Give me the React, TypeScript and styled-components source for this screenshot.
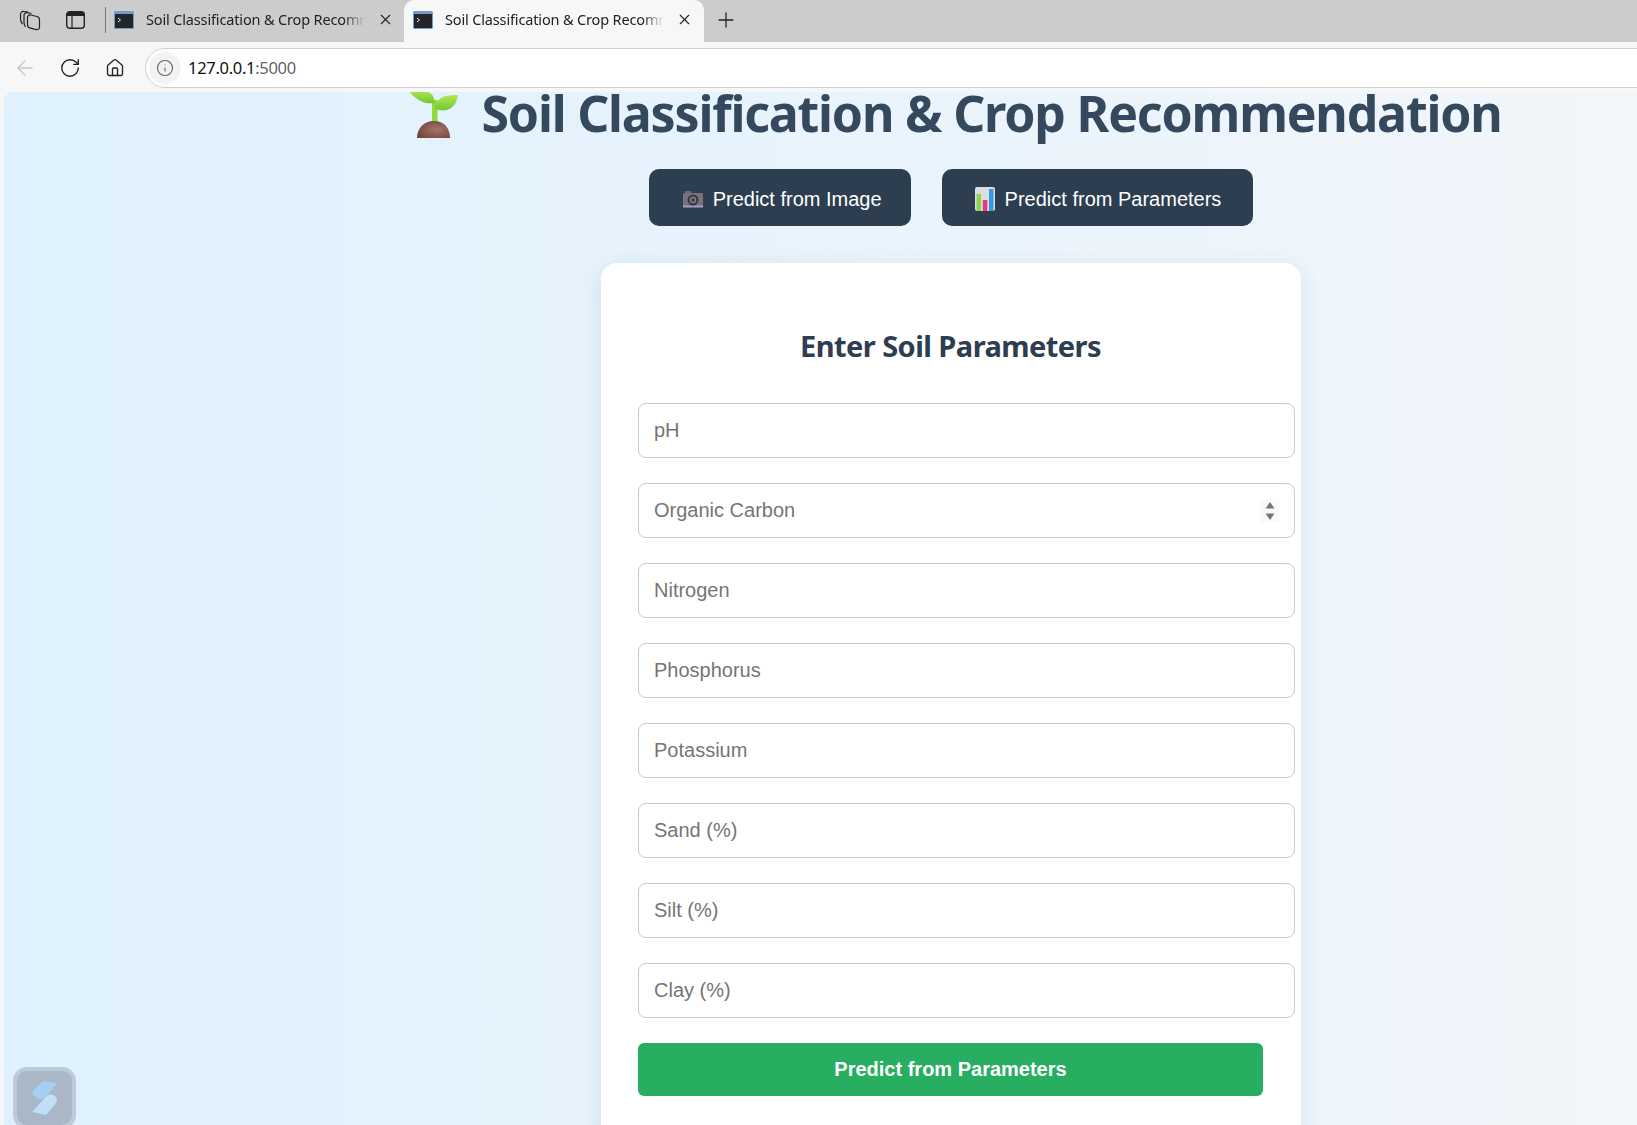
import styled, { createGlobalStyle } from 'styled-components';
import { ArrowLeft, RotateCw, Home, Info, Plus, X } from 'lucide-react';

const FIELDS_BEFORE = ['pH'];
const FIELDS_AFTER = ['Nitrogen', 'Phosphorus', 'Potassium', 'Sand (%)', 'Silt (%)', 'Clay (%)'];

const TerminalIcon = () => (
  <svg width="20" height="18" viewBox="0 0 20 18">
    <rect x="0" y="0" width="20" height="18" rx="1.5" fill="#6f9bd1" />
    <rect x="1" y="3" width="18" height="14" fill="#22262b" />
    <path d="M4 7l2.5 2L4 11" stroke="#e8e8e8" strokeWidth="1" fill="none" />
  </svg>
);

const CollectionsIcon = () => (
  <svg width="22" height="22" viewBox="0 0 22 22" fill="none" stroke="#222" strokeWidth="1.2">
    <path d="M3.5 15C2.200 13.500 1.500 12 1.500 10V5.500C1.500 3.500 3 2.200 5 2.500L9 3.200" />
    <path d="M6.500 18C5.500 16.500 5 15 5 13.500V6.500C5 4.500 6.500 3.200 8.500 3.700L12.500 4.500" />
    <path d="M8.500 8.500C8.500 6.800 10 5.600 11.700 6L18 7.500C19.500 7.900 20.500 9.200 20.500 10.700V18C20.500 19.800 19 21 17.300 20.600L11.500 19.200C9.800 18.800 8.500 17.400 8.500 15.700z" />
  </svg>
);

const SidebarIcon = () => (
  <svg width="19" height="18" viewBox="0 0 19 18" fill="none">
    <rect x="0.7" y="0.7" width="17.600" height="16.600" rx="3" stroke="#222" strokeWidth="1.400" />
    <path d="M1 4V3.500C1 1.800 2 1 3.500 1h12c1.500 0 2.500.8 2.500 2.500V5H1z" fill="#222" />
    <path d="M6 5v12" stroke="#222" strokeWidth="1.200" />
  </svg>
);

const SproutEmoji = () => (
  <svg width="52" height="48" viewBox="0 0 52 48">
    <defs>
      <linearGradient id="leaf" x1="0" y1="0" x2="0" y2="1">
        <stop offset="0" stopColor="#b5e655" />
        <stop offset="1" stopColor="#6fc92f" />
      </linearGradient>
      <radialGradient id="soil" cx="0.6" cy="0.5" r="0.7">
        <stop offset="0" stopColor="#a8736a" />
        <stop offset="1" stopColor="#6d4339" />
      </radialGradient>
    </defs>
    <path d="M24 34V10h5.500v24z" fill="#8edb3c" />
    <path d="M1 0c5 0 9 0 16 1 6 1 9 4 10 12-9 1-14-1-19-5C4 5 2 3 1 0z" fill="url(#leaf)" />
    <path d="M50 5c-1 8-5 13-11 15-5 1-8 0-12-1 1-7 5-12 11-13 4-1 8-1 12-1z" fill="url(#leaf)" />
    <path d="M9 48c0-10 7-17 17-17s16 7 16 17z" fill="url(#soil)" />
  </svg>
);

const CameraEmoji = () => (
  <svg width="20" height="18" viewBox="0 0 20 18">
    <rect x="2" y="1" width="6" height="3" fill="#6d6a73" />
    <rect x="0" y="3" width="20" height="14" rx="1" fill="#77737b" />
    <rect x="0" y="15.500" width="20" height="2" fill="#a79bc0" />
    <circle cx="10" cy="10" r="5.500" fill="#3c3a40" />
    <circle cx="10" cy="10" r="3.200" fill="#8a8690" />
    <circle cx="10" cy="10" r="2" fill="#46434b" />
  </svg>
);

const ChartEmoji = () => (
  <svg width="20" height="24" viewBox="0 0 20 24">
    <rect x="0" y="0" width="20" height="24" rx="2" fill="#dcdce2" />
    <rect x="1.500" y="7" width="4.500" height="17" fill="#8fd44f" />
    <rect x="7.800" y="13" width="4.500" height="11" fill="#ea3a7c" />
    <rect x="14" y="2" width="4.500" height="22" fill="#2f9ae6" />
  </svg>
);

const SelectArrows = () => (
  <ArrowsBox>
    <svg width="10" height="18" viewBox="0 0 10 18" fill="#757575">
      <path d="M5 0l4.500 6.500H.5z" />
      <path d="M5 18L.5 11.500h9z" />
    </svg>
  </ArrowsBox>
);

const App = () => {
  return (
    <Screen>
      <GlobalStyle />
      <TabStrip>
        <StripIcon $width={60}>
          <CollectionsIcon />
        </StripIcon>
        <StripIcon $width={30}>
          <SidebarIcon />
        </StripIcon>
        <StripDivider />
        <Tab>
          <TerminalIcon />
          <TabTitle>Soil Classification &amp; Crop Recommendation</TabTitle>
          <X size={17} color="#222" strokeWidth={1.6} />
        </Tab>
        <Tab $active>
          <TerminalIcon />
          <TabTitle>Soil Classification &amp; Crop Recommendation</TabTitle>
          <X size={17} color="#222" strokeWidth={1.6} />
        </Tab>
        <NewTab>
          <Plus size={24} color="#222" strokeWidth={1.300} />
        </NewTab>
      </TabStrip>

      <Toolbar>
        <NavButton>
          <ArrowLeft size={24} color="#c8c8c8" strokeWidth={1.400} />
        </NavButton>
        <NavButton>
          <RotateCw size={22} color="#222" strokeWidth={1.500} />
        </NavButton>
        <NavButton>
          <Home size={20} color="#222" strokeWidth={1.600} />
        </NavButton>
        <AddressBar>
          <SiteInfo>
            <Info size={18} color="#666" strokeWidth={1.500} />
          </SiteInfo>
          <UrlHost>127.0.0.1</UrlHost>
          <UrlPort>:5000</UrlPort>
        </AddressBar>
      </Toolbar>

      <Viewport>
        <Page>
          <Title>
            <TitleEmoji>
              <SproutEmoji />
            </TitleEmoji>
            Soil Classification &amp; Crop Recommendation
          </Title>

          <ModeRow>
            <ModeButton>
              <CameraEmoji />
              Predict from Image
            </ModeButton>
            <ModeButton>
              <ChartEmoji />
              Predict from Parameters
            </ModeButton>
          </ModeRow>

          <Card>
            <CardHeading>Enter Soil Parameters</CardHeading>
            <Form>
              {FIELDS_BEFORE.map((name) => (
                <Field key={name} placeholder={name} />
              ))}
              <SelectWrap>
                <SoilSelect defaultValue="">
                  <option value="" disabled>
                    Organic Carbon
                  </option>
                  <option value="low">Low</option>
                  <option value="medium">Medium</option>
                  <option value="high">High</option>
                </SoilSelect>
                <SelectArrows />
              </SelectWrap>
              {FIELDS_AFTER.map((name) => (
                <Field key={name} placeholder={name} />
              ))}
              <SubmitButton type="button">Predict from Parameters</SubmitButton>
            </Form>
          </Card>
        </Page>

        <FloatingWidget>
          <svg width="25" height="34" viewBox="0 0 25 34">
            <path d="M11 0L25 2L13 17C11 19 7 18 4 16C0 14 0 11 2 9z" fill="#a5cff4" />
            <path d="M21 14C25 16 26 19 24 22L14 34L0 31L11 19C13 16 17 12 21 14z" fill="#c0def7" />
          </svg>
        </FloatingWidget>
      </Viewport>
    </Screen>
  );
};

export default App;

const GlobalStyle = createGlobalStyle`
  html, body {
    margin: 0;
    padding: 0;
    height: 100%;
    overflow: hidden;
  }

  * {
    box-sizing: border-box;
  }
`;

const Screen = styled.div`
  display: flex;
  flex-direction: column;
  width: 1637px;
  height: 1125px;
  overflow: hidden;
  background: #f7f7f7;
  font-family: 'Liberation Sans', Arial, sans-serif;
`;

const TabStrip = styled.div`
  display: flex;
  align-items: center;
  flex: 0 0 42px;
  background: #cccccc;
`;

const StripIcon = styled.div<{ $width: number }>`
  display: flex;
  align-items: center;
  justify-content: center;
  width: ${(p) => p.$width}px;
  height: 42px;
  padding-bottom: 2px;
`;

const StripDivider = styled.div`
  width: 1px;
  height: 26px;
  margin: 0 -1px 2px 15px;
  background: #777;
`;

const Tab = styled.div<{ $active?: boolean }>`
  display: flex;
  align-items: center;
  width: 300px;
  height: 42px;
  padding: 0 11px 3px 9px;
  border-radius: 10px 10px 0 0;
  background: ${(p) => (p.$active ? '#f7f7f7' : 'transparent')};
  margin-right: ${(p) => (p.$active ? '0' : '-1px')};
`;

const TabTitle = styled.span`
  flex: 1;
  min-width: 0;
  margin: 0 12px 2px;
  overflow: hidden;
  white-space: nowrap;
  font-family: 'Noto Sans', 'Open Sans', sans-serif;
  font-size: 14.500px;
  letter-spacing: -0.15px;
  color: #222;
  -webkit-mask-image: linear-gradient(to right, #000 90%, transparent 100%);
  mask-image: linear-gradient(to right, #000 90%, transparent 100%);
`;

const NewTab = styled.div`
  display: flex;
  align-items: center;
  justify-content: center;
  width: 44px;
  height: 42px;
  padding-bottom: 2px;
`;

const Toolbar = styled.div`
  display: flex;
  align-items: center;
  flex: 0 0 50px;
  padding: 2px 0 0 2px;
  background: #f7f7f7;
`;

const NavButton = styled.div`
  display: flex;
  align-items: center;
  justify-content: center;
  flex: 0 0 45px;
  height: 40px;
`;

const AddressBar = styled.div`
  display: flex;
  align-items: center;
  flex: 0 0 1700px;
  height: 40px;
  margin-left: 8px;
  padding: 0 0 0 3px;
  border: 1px solid #d0d0d0;
  border-radius: 21px;
  background: #fff;
  font-family: 'Noto Sans', 'Open Sans', sans-serif;
  font-size: 16.500px;
  letter-spacing: -0.3px;
`;

const SiteInfo = styled.div`
  display: flex;
  align-items: center;
  justify-content: center;
  width: 32px;
  height: 32px;
  margin-right: 7px;
  border-radius: 50%;
  background: #f2f2f2;
`;

const UrlHost = styled.span`
  margin-bottom: 1px;
  color: #111;
`;

const UrlPort = styled.span`
  margin-bottom: 1px;
  color: #5f6368;
`;

const Viewport = styled.div`
  position: relative;
  flex: 1;
  min-height: 0;
  margin-left: 4px;
  overflow: hidden;
  border-top-left-radius: 9px;
`;

const Page = styled.div`
  display: flex;
  flex-direction: column;
  align-items: center;
  width: 1894px;
  min-height: 100%;
  background: linear-gradient(to right, #dff1fe, #f5f7fa);
`;

const Title = styled.h1`
  display: flex;
  align-items: center;
  height: 60px;
  margin: -9px 0 26px 8px;
  font-family: 'Noto Sans', 'Open Sans', sans-serif;
  font-size: 50px;
  font-weight: 700;
  line-height: 60px;
  letter-spacing: -1.18px;
  white-space: nowrap;
  color: #34495e;
`;

const TitleEmoji = styled.span`
  display: flex;
  margin-right: 21px;
  padding-top: 2px;
`;

const ModeRow = styled.div`
  display: flex;
  gap: 31px;
  margin-bottom: 37px;
`;

const ModeButton = styled.button`
  display: flex;
  align-items: center;
  gap: 10px;
  height: 57px;
  padding: 3px 32px 0 33px;
  border: none;
  border-radius: 10px;
  background: #2c3e50;
  font-family: 'Liberation Sans', Arial, sans-serif;
  font-size: 20px;
  color: #fff;

  &:first-child {
    padding-left: 34px;
    padding-right: 29px;
  }
`;

const Card = styled.section`
  width: 700px;
  padding: 63px 38px 64px 37px;
  border-radius: 16px;
  background: #fff;
  box-shadow: 0 6px 22px rgba(40, 70, 110, 0.12);
`;

const CardHeading = styled.h2`
  margin: 0 0 37px;
  font-family: 'Noto Sans', 'Open Sans', sans-serif;
  font-size: 29px;
  font-weight: 700;
  line-height: 40px;
  letter-spacing: -0.55px;
  text-align: center;
  color: #2c3e50;
`;

const Form = styled.form`
  display: flex;
  flex-direction: column;
  gap: 25px;
`;

const Field = styled.input`
  flex: none;
  width: calc(100% + 32px);
  height: 55px;
  padding: 0 15px;
  border: 1px solid #cccccc;
  border-radius: 8px;
  outline: none;
  background: #fff;
  font-family: 'Liberation Sans', Arial, sans-serif;
  font-size: 20px;
  color: #333;

  &::placeholder {
    color: #757575;
    opacity: 1;
  }
`;

const SelectWrap = styled.div`
  position: relative;
  width: calc(100% + 32px);
  height: 55px;
`;

const SoilSelect = styled.select`
  width: 100%;
  height: 100%;
  padding: 0 15px 2px;
  border: 1px solid #cccccc;
  border-radius: 8px;
  outline: none;
  appearance: none;
  background: #fff;
  font-family: 'Liberation Sans', Arial, sans-serif;
  font-size: 20px;
  color: #757575;
`;

const ArrowsBox = styled.div`
  position: absolute;
  top: 16px;
  right: 16px;
  display: flex;
  align-items: center;
  justify-content: center;
  width: 19px;
  height: 23px;
  background: #f9f9f9;
  pointer-events: none;
`;

const SubmitButton = styled.button`
  width: 100%;
  height: 53px;
  border: none;
  border-radius: 6px;
  background: #27ae60;
  font-family: 'Liberation Sans', Arial, sans-serif;
  font-size: 20px;
  font-weight: 700;
  color: #fff;
`;

const FloatingWidget = styled.div`
  position: absolute;
  left: 9px;
  top: 975px;
  display: flex;
  align-items: center;
  justify-content: center;
  width: 63px;
  height: 62px;
  border: 4px solid #bccbd9;
  border-radius: 14px;
  background: #a9b7c6;
`;
